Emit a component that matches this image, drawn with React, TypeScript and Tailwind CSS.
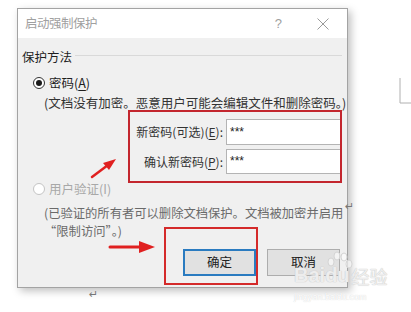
import React from 'react';

const FONT = '"Noto Sans CJK SC", "Liberation Sans", sans-serif';

const Radio: React.FC<{ checked?: boolean; disabled?: boolean }> = ({ checked, disabled }) => (
  <span
    className={`flex h-[12px] w-[12px] items-center justify-center rounded-full border bg-white ${
      disabled ? 'border-[#c4c4c4]' : 'border-[#333]'
    }`}
  >
    {checked && <span className="h-[6px] w-[6px] rounded-full bg-[#1a1a1a]" />}
  </span>
);

const Key: React.FC<{ k: string }> = ({ k }) => <span className="underline underline-offset-2">{k}</span>;

export default function App() {
  return (
    <div
      className="relative h-[312px] w-[411px] overflow-hidden bg-white pl-[17px] pt-[8px]"
      style={{ fontFamily: FONT }}
    >
      {/* dialog window */}
      <div className="flex h-[280px] w-[331px] flex-col border border-[#a3a3a3] bg-[#f0f0f0] shadow-[3px_3px_8px_rgba(0,0,0,0.25)]">
        <div className="flex h-[29px] items-center bg-white pl-[7px] pr-[18px] text-[12.5px] text-[#a0a0a0]">
          <span className="tracking-[-0.5px]">启动强制保护</span>
          <span className="ml-auto mr-[35px] font-['Liberation_Sans'] text-[13px]">?</span>
          <svg width="12" height="12" viewBox="0 0 12 12" className="mt-[1px]">
            <path d="M0.5 0.5 L11.5 11.5 M11.5 0.5 L0.5 11.5" stroke="#9a9a9a" strokeWidth="1" />
          </svg>
        </div>

        <div className="flex flex-1 flex-col pl-[4px] pr-[5px] text-[12.5px] text-[#1e1e1e]">
          <div className="mt-[10px] flex h-[18px] items-center">
            <span>保护方法</span>
            <span className="ml-[3px] mt-[-3px] h-px flex-1 bg-[#d9d9d9]" />
          </div>

          <div className="ml-[11px] mt-[8px] flex h-[18px] items-center gap-[4px]">
            <Radio checked />
            <span>
              密码(<Key k="A" />)
            </span>
          </div>

          <div className="ml-[22px] mt-[2px] h-[18px] whitespace-nowrap leading-[18px] text-[#333]">
            (文档没有加密。恶意用户可能会编辑文件和删除密码。)
          </div>

          <div className="ml-[105px] mt-[7px] flex flex-col gap-[4px] text-[12px]">
            <div className="flex items-center">
              <span className="w-[99px] whitespace-nowrap pr-[3px] text-right text-[#333]">
                新密码(可选)(<Key k="E" />):
              </span>
              <div className="flex h-[26px] w-[115px] items-start border border-[#b4b4b4] bg-white pl-[3px] pt-[3px] font-['Liberation_Sans'] text-[#222]">
                ***
              </div>
            </div>
            <div className="flex items-center">
              <span className="w-[99px] whitespace-nowrap pr-[3px] text-right text-[#333]">
                确认新密码(<Key k="P" />):
              </span>
              <div className="flex h-[25px] w-[115px] items-start border border-[#b4b4b4] bg-white pl-[3px] pt-[2px] font-['Liberation_Sans'] text-[#222]">
                ***
              </div>
            </div>
          </div>

          <div className="ml-[11px] mt-[6px] flex h-[18px] items-center gap-[4px] text-[#a8a8a8]">
            <Radio disabled />
            <span>用户验证(I)</span>
          </div>

          <div className="ml-[22px] mt-[6px] text-[12.3px] leading-[18px] text-[#6a6a6a]">
            <div className="whitespace-nowrap">(已验证的所有者可以删除文档保护。文档被加密并启用</div>
            <div className="whitespace-nowrap">“限制访问”。)</div>
          </div>

          <div className="mt-[9px] flex justify-end gap-[11px] pr-[2px]">
            <button className="flex h-[27px] w-[73px] items-center justify-center border-2 border-[#2a7bc0] bg-[#e1e1e1] text-[#222]">
              确定
            </button>
            <button className="flex h-[27px] w-[73px] items-center justify-center border border-[#adadad] bg-[#e1e1e1] text-[#222]">
              取消
            </button>
          </div>
        </div>
      </div>

      {/* annotations on top of the screenshot */}
      <div className="absolute left-[128px] top-[110px] h-[73px] w-[214px] border-2 border-[#c3262e]" />
      <div className="absolute left-[164px] top-[227px] h-[58px] w-[94px] border-2 border-[#d42a2a]" />

      <svg className="absolute left-0 top-0" width="411" height="312" viewBox="0 0 411 312">
        <path d="M92 177 L108 165" stroke="#e02020" strokeWidth="2.5" strokeLinecap="round" />
        <path d="M116 159 L103 163 L109 170 Z" fill="#e02020" />
        <path d="M110 247 L142 247" stroke="#e02020" strokeWidth="3" strokeLinecap="round" />
        <path d="M155 247 L139 241 L139 253 Z" fill="#e02020" />
        <path d="M400 78 L400 103 L411 103" stroke="#b0b0b0" strokeWidth="1" fill="none" />
        {/* baidu paw watermark */}
        <g fill="rgba(255,255,255,0.6)" stroke="#d4d4d4" strokeWidth="1">
          <ellipse cx="331" cy="262" rx="3" ry="4" />
          <ellipse cx="337" cy="256" rx="3" ry="4" />
          <ellipse cx="344" cy="257" rx="3" ry="4" />
          <ellipse cx="349" cy="264" rx="3" ry="4" />
        </g>
      </svg>

      <span className="absolute left-[345px] top-[199px] font-['DejaVu_Sans'] text-[11px] text-[#777]">↵</span>
      <span className="absolute left-[89px] top-[287px] font-['DejaVu_Sans'] text-[11px] text-[#777]">↵</span>

      {/* watermark */}
      <div className="absolute left-[294px] top-[265px] flex items-end text-[20px] font-bold leading-none text-white/70 [text-shadow:0_0_1px_#c8c8c8,0_0_1px_#c8c8c8]">
        <span className="font-['Liberation_Sans']">Bai</span>
        <span className="font-['Liberation_Sans']">du</span>
        <span className="ml-[2px] text-[18px] font-normal">经验</span>
      </div>
      <div className="absolute left-[294px] top-[291px] font-['Liberation_Sans'] text-[9px] text-white [text-shadow:0_0_1px_#c8c8c8]">
        jingyan.baidu.com
      </div>
    </div>
  );
}
